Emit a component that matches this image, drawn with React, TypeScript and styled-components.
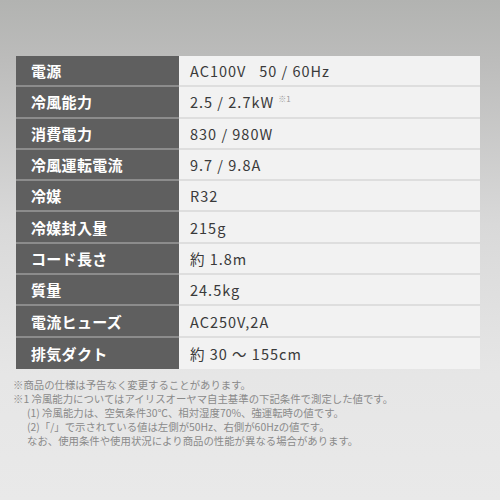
import React from 'react';
import styled, { createGlobalStyle } from 'styled-components';

const GlobalStyle = createGlobalStyle`
  html, body {
    margin: 0;
    padding: 0;
  }
  body {
    font-family: "Noto Sans CJK JP", "Noto Sans", sans-serif;
  }
`;

const Page = styled.div`
  width: 500px;
  height: 500px;
  box-sizing: border-box;
  padding: 56px 20px 0 16px;
  background: linear-gradient(
    to bottom,
    #b2b3b1 0%,
    #bcbcbb 12%,
    #d9d9d9 45%,
    #e6e6e6 75%,
    #e9e9e9 100%
  );
  overflow: hidden;
`;

const Table = styled.div`
  display: grid;
  grid-template-columns: 163px 1fr;
  grid-auto-rows: 31.3px;
  width: 464px;
`;

const Label = styled.div<{ $last?: boolean }>`
  display: flex;
  align-items: center;
  padding-left: 15px;
  background: #5f5f5f;
  border-bottom: ${(p) => (p.$last ? 'none' : '2px solid #8c8c8c')};
  color: #ffffff;
  font-size: 15px;
  font-weight: 700;
  letter-spacing: 0.3px;
`;

const Value = styled.div<{ $last?: boolean }>`
  display: flex;
  align-items: center;
  padding-left: 11px;
  background: #f2f2f2;
  border-bottom: ${(p) => (p.$last ? 'none' : '2px solid #dedede')};
  color: #3a3a3a;
  font-size: 14.5px;
  font-weight: 400;
  letter-spacing: 1px;
`;

const Note = styled.sup`
  margin-left: 4px;
  font-size: 8px;
  color: #999999;
  align-self: flex-start;
  margin-top: 6px;
  letter-spacing: 0;
`;

const Notes = styled.div`
  margin: 9px 0 0 -3px;
  color: #8a8a8a;
  font-size: 10.4px;
  line-height: 14px;
`;

const NoteLine = styled.div<{ $indent?: boolean }>`
  padding-left: ${(p) => (p.$indent ? '14px' : '0')};
  white-space: nowrap;
`;

const rows: { label: string; value: React.ReactNode }[] = [
  { label: '電源', value: 'AC100V\u00a0\u00a0\u00a050 / 60Hz' },
  {
    label: '冷風能力',
    value: (
      <>
        2.5 / 2.7kW<Note>※1</Note>
      </>
    ),
  },
  { label: '消費電力', value: '830 / 980W' },
  { label: '冷風運転電流', value: '9.7 / 9.8A' },
  { label: '冷媒', value: 'R32' },
  { label: '冷媒封入量', value: '215g' },
  { label: 'コード長さ', value: '約 1.8m' },
  { label: '質量', value: '24.5kg' },
  { label: '電流ヒューズ', value: 'AC250V,2A' },
  { label: '排気ダクト', value: '約 30 ～ 155cm' },
];

export default function App() {
  return (
    <>
      <GlobalStyle />
      <Page>
        <Table>
          {rows.map((r, i) => (
            <React.Fragment key={r.label}>
              <Label $last={i === rows.length - 1}>{r.label}</Label>
              <Value $last={i === rows.length - 1}>{r.value}</Value>
            </React.Fragment>
          ))}
        </Table>
        <Notes>
          <NoteLine>※商品の仕様は予告なく変更することがあります。</NoteLine>
          <NoteLine>※1 冷風能力についてはアイリスオーヤマ自主基準の下記条件で測定した値です。</NoteLine>
          <NoteLine $indent>(1) 冷風能力は、空気条件30℃、相対湿度70%、強運転時の値です。</NoteLine>
          <NoteLine $indent>(2)「/」で示されている値は左側が50Hz、右側が60Hzの値です。</NoteLine>
          <NoteLine $indent>なお、使用条件や使用状況により商品の性能が異なる場合があります。</NoteLine>
        </Notes>
      </Page>
    </>
  );
}
